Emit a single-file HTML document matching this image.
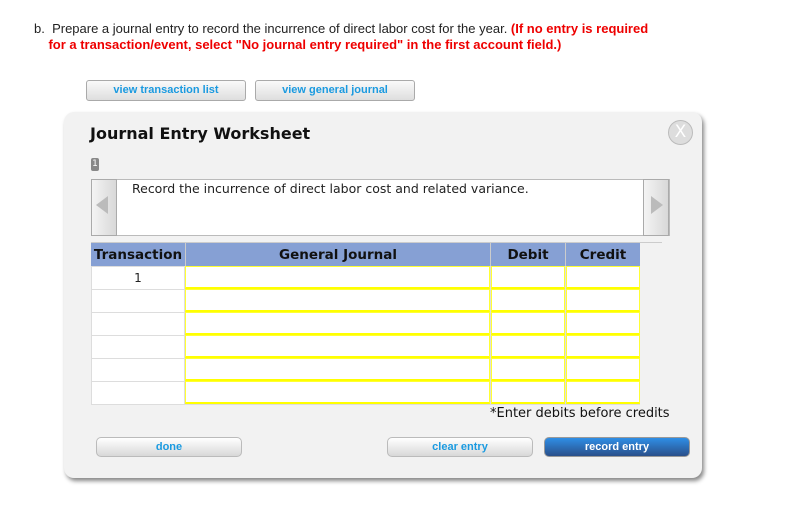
<!DOCTYPE html>
<html><head><style>
body{margin:0;width:791px;height:532px;background:#fff;font-family:"DejaVu Sans","Liberation Sans",sans-serif;position:relative;overflow:hidden}
.a{position:absolute}
.q{font-family:"Liberation Sans",Arial,sans-serif;font-size:13px;color:#222;left:34px;top:21px;line-height:16px}
.q b{color:#e00}
.btn{position:absolute;height:19px;border:1px solid #aaa;border-radius:3px;background:linear-gradient(#fafafa,#dedede);color:#1a9ae0;font-family:"Liberation Sans",sans-serif;font-weight:bold;font-size:11px;text-align:center;line-height:19px}
.panel{left:64px;top:112px;width:638px;height:366px;background:#f2f2f2;border-radius:10px;box-shadow:2px 3px 4px #888}
.cell{position:absolute;box-sizing:border-box;background:#fff}
.rb{position:absolute;height:18px;border:1px solid #bbb;border-radius:5px;background:linear-gradient(#fff,#d8d8d8);color:#1a9ae0;font-family:"Liberation Sans",sans-serif;font-weight:bold;font-size:11px;text-align:center;line-height:18px}
</style></head><body>
<div class="a q">b.&nbsp; Prepare a journal entry to record the incurrence of direct labor cost for the year. <b>(If no entry is required<br>&nbsp;&nbsp;&nbsp;&nbsp;for a transaction/event, select "No journal entry required" in the first account field.)</b></div>
<div class="btn" style="left:86px;top:80px;width:158px">view transaction list</div>
<div class="btn" style="left:255px;top:80px;width:158px">view general journal</div>
<div class="a panel"></div>
<div class="a" style="left:90px;top:124px;font-size:16px;font-weight:bold;color:#111">Journal Entry Worksheet</div>
<div class="a" style="left:668px;top:120px;width:23px;height:23px;border-radius:50%;background:#ddd;border:1px solid #bbb;color:#fff;font-size:17px;text-align:center;line-height:23px">X</div>
<div class="a" style="left:91px;top:158px;width:8px;height:13px;background:#888;border-radius:2px;color:#fff;font-size:9px;text-align:center;line-height:13px">1</div>
<div class="a" style="left:91px;top:179px;width:577px;height:55px;background:#fff;border:1px solid #bbb"></div>
<div class="a" style="left:91px;top:179px;width:24px;height:55px;background:linear-gradient(90deg,#f4f4f4,#d8d8d8);border:1px solid #aaa"></div>
<div class="a" style="left:96px;top:196px;width:0;height:0;border-top:9px solid transparent;border-bottom:9px solid transparent;border-right:12px solid #bbb"></div>
<div class="a" style="left:643px;top:179px;width:24px;height:55px;background:linear-gradient(90deg,#f4f4f4,#d8d8d8);border:1px solid #aaa"></div>
<div class="a" style="left:651px;top:196px;width:0;height:0;border-top:9px solid transparent;border-bottom:9px solid transparent;border-left:12px solid #bbb"></div>
<div class="a" style="left:132px;top:181px;font-size:12.5px;color:#222">Record the incurrence of direct labor cost and related variance.</div>
<div class="a" style="left:91px;top:242px;width:571px;height:1px;background:#ccc"></div>
<div class="a" style="left:91px;top:243px;width:549px;height:23px;background:#86a0d4"></div>
<div class="a" style="left:91px;top:243px;width:94px;height:23px;background:#86a0d4;border-right:1px solid #ccc;font-weight:bold;font-size:13.5px;line-height:24px;text-align:center;color:#111">Transaction</div>
<div class="a" style="left:186px;top:243px;width:304px;height:23px;font-weight:bold;font-size:13.5px;line-height:24px;text-align:center;color:#111;border-right:1px solid #ccc">General Journal</div>
<div class="a" style="left:491px;top:243px;width:74px;height:23px;font-weight:bold;font-size:13.5px;line-height:24px;text-align:center;color:#111;border-right:1px solid #ccc">Debit</div>
<div class="a" style="left:566px;top:243px;width:74px;height:23px;font-weight:bold;font-size:13.5px;line-height:24px;text-align:center;color:#111">Credit</div>
<div class="a" style="left:91px;top:266px;width:549px;height:139px;background:#ddd"></div>
<div id="rows"></div>
<script>
var h='';for(var i=0;i<6;i++){var y=266+i*23;
h+='<div class="cell" style="left:92px;top:'+(y+1)+'px;width:92px;height:22px;font-size:12px;text-align:center;line-height:22px;color:#222">'+(i==0?'1':'')+'</div>';
var s='border:1px solid #ff3;border-bottom:2px solid #ff0;';
h+='<div class="cell" style="left:185px;top:'+y+'px;width:305px;height:23px;'+s+'"></div>';
h+='<div class="cell" style="left:491px;top:'+y+'px;width:74px;height:23px;'+s+'"></div>';
h+='<div class="cell" style="left:566px;top:'+y+'px;width:74px;height:23px;'+s+'"></div>';}
document.getElementById('rows').innerHTML=h;
</script>
<div class="a" style="left:490px;top:406px;font-size:13px;color:#111">*Enter debits before credits</div>
<div class="rb" style="left:96px;top:437px;width:144px">done</div>
<div class="rb" style="left:387px;top:437px;width:144px">clear entry</div>
<div class="rb" style="left:544px;top:437px;width:144px;background:linear-gradient(#2f8ee6,#2a4f8a);color:#fff;border-color:#999">record entry</div>
</body></html>
